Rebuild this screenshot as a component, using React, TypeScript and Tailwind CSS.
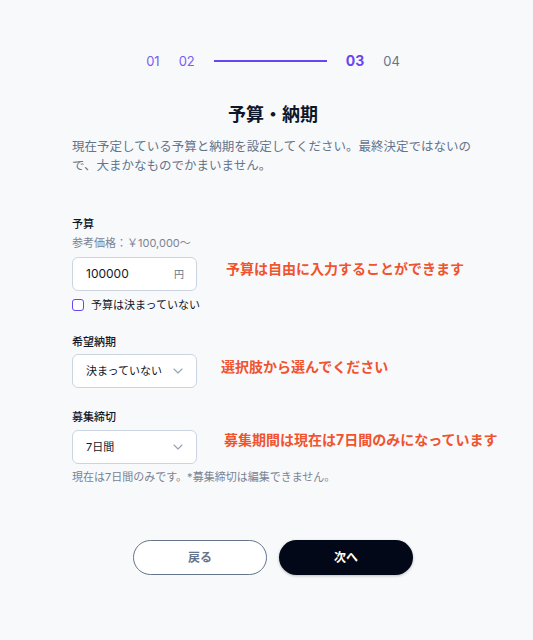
import React from "react";

const font = { fontFamily: '"Inter", "Noto Sans CJK JP", sans-serif' };

function Chevron() {
  return (
    <svg width="10" height="6" viewBox="0 0 10 6" fill="none" className="shrink-0">
      <path d="M1 1l4 4 4-4" stroke="#94a3b8" strokeWidth="1.1" strokeLinecap="round" strokeLinejoin="round" />
    </svg>
  );
}

export default function App() {
  return (
    <div className="relative min-h-[640px] w-full bg-[#f8f9fb] text-[#0f172a]" style={font}>
      <div className="ml-[72px] w-[402px] pt-[52px] flex flex-col">
        {/* stepper */}
        <div className="flex items-center justify-center gap-[19px] h-[18px] text-[13px] leading-[18px]">
          <span className="text-[#7a5cf5]">01</span>
          <span className="text-[#7a5cf5]">02</span>
          <span className="block w-[113px] h-[2px] bg-[#6a45f2]" />
          <span className="text-[#6a45f2] font-bold text-[14px]">03</span>
          <span className="text-[#64748b]">04</span>
        </div>

        <h1 className="mt-[31px] text-center text-[18px] leading-[28px] font-bold text-[#0f172a]">予算・納期</h1>
        <p className="mt-[8px] mr-[-20px] text-[12.5px] leading-[19px] text-[#64748b]">
          現在予定している予算と納期を設定してください。最終決定ではないの
          <br />
          で、大まかなものでかまいません。
        </p>

        <div className="mt-[41px] text-[11px] leading-[16px] font-medium text-[#0f172a]">予算</div>
        <div className="mt-[3px] text-[11px] leading-[16px] text-[#7b8494]">参考価格：￥100,000〜</div>
        <div className="mt-[6px] w-[125px] h-[34px] rounded-[6px] border border-[#cbd5e1] bg-white flex items-center justify-between pl-[13px] pr-[12px]">
          <span className="text-[12px] text-[#0f172a]">100000</span>
          <span className="text-[10px] text-[#64748b]">円</span>
        </div>
        <label className="mt-[6px] h-[16px] flex items-center gap-[7px]">
          <span className="block w-[12px] h-[12px] rounded-[3px] border-[1.5px] border-[#6a45f2] bg-white" />
          <span className="text-[11px] leading-[16px] text-[#0f172a]">予算は決まっていない</span>
        </label>

        <div className="mt-[21px] text-[11px] leading-[16px] font-medium text-[#0f172a]">希望納期</div>
        <div className="mt-[4px] w-[125px] h-[34px] rounded-[6px] border border-[#cbd5e1] bg-white flex items-center justify-between pl-[13px] pr-[13px]">
          <span className="text-[11px] text-[#0f172a]">決まっていない</span>
          <Chevron />
        </div>

        <div className="mt-[21px] text-[11px] leading-[16px] font-medium text-[#0f172a]">募集締切</div>
        <div className="mt-[5px] w-[125px] h-[34px] rounded-[6px] border border-[#cbd5e1] bg-white flex items-center justify-between pl-[13px] pr-[13px]">
          <span className="text-[11px] text-[#0f172a]">7日間</span>
          <Chevron />
        </div>
        <div className="mt-[5px] text-[11px] leading-[16px] text-[#7b8494]">現在は7日間のみです。*募集締切は編集できません。</div>

        <div className="mt-[55px] flex justify-center gap-[12px]">
          <button className="w-[134px] h-[35px] rounded-full border border-[#64748b] bg-white text-[12px] font-bold text-[#64748b]">戻る</button>
          <button className="w-[134px] h-[35px] rounded-full bg-[#020817] text-[12px] font-bold text-white shadow-[0_1px_3px_rgba(0,0,0,0.25)]">次へ</button>
        </div>
      </div>

      <div className="absolute left-[226px] top-[259px] text-[14px] leading-[20px] font-bold text-[#f0532e]">予算は自由に入力することができます</div>
      <div className="absolute left-[221px] top-[357px] text-[14px] leading-[20px] font-bold text-[#f0532e]">選択肢から選んでください</div>
      <div className="absolute left-[224px] top-[430px] text-[14px] leading-[20px] font-bold text-[#f0532e]">募集期間は現在は7日間のみになっています</div>
    </div>
  );
}
